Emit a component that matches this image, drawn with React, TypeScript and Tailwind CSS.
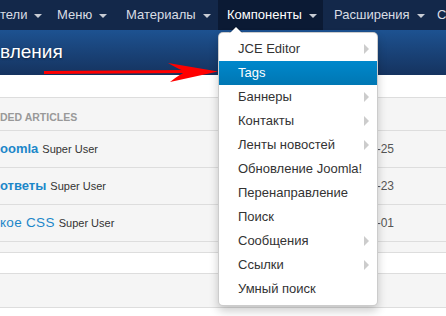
const menu = [
  { label: "JCE Editor", sub: true },
  { label: "Tags", sub: false, active: true },
  { label: "Баннеры", sub: true },
  { label: "Контакты", sub: true },
  { label: "Ленты новостей", sub: true },
  { label: "Обновление Joomla!", sub: false },
  { label: "Перенаправление", sub: false },
  { label: "Поиск", sub: false },
  { label: "Сообщения", sub: true },
  { label: "Ссылки", sub: true },
  { label: "Умный поиск", sub: false },
];

const Caret = () => (
  <span className="ml-[7px] mt-[1px] w-0 h-0 border-x-[4px] border-x-transparent border-t-[4px] border-t-[#c8ccd4]" />
);

const Row = ({
  title,
  bold = true,
  date,
}: {
  title: string;
  bold?: boolean;
  date: string;
}) => (
  <div className="h-[37px] flex items-center border-b border-[#dddddd] whitespace-nowrap">
    <span
      className={
        bold
          ? "text-[13px] font-bold text-[#1c87c9]"
          : "text-[13.5px] tracking-[0.3px] text-[#1c87c9]"
      }
    >
      {title}
    </span>
    <span className="ml-[4px] text-[11px] text-[#333333]">Super User</span>
    <span className="ml-auto pr-[52px] text-[12px] text-[#555555]">{date}</span>
  </div>
);

export default function App() {
  return (
    <div className="relative w-[446px] h-[316px] overflow-hidden bg-white font-['Liberation_Sans',Arial,sans-serif]">
      {/* top navbar */}
      <nav className="h-[30px] flex items-stretch bg-[#13284a] text-[13px] text-[#d9dde4] whitespace-nowrap overflow-hidden">
        <div className="w-[47px] shrink-0 flex items-center">
          тели <Caret />
        </div>
        <div className="w-[69px] shrink-0 flex items-center pl-[10px]">
          Меню <Caret />
        </div>
        <div className="w-[102px] shrink-0 flex items-center pl-[10px]">
          Материалы <Caret />
        </div>
        <div className="w-[105px] shrink-0 flex items-center pl-[9px] bg-[#0b1a34] text-white">
          Компоненты <Caret />
        </div>
        <div className="w-[110px] shrink-0 flex items-center pl-[11px]">
          Расширения <Caret />
        </div>
        <div className="shrink-0 flex items-center pl-[4px]">
          Справка <Caret />
        </div>
      </nav>

      {/* page title */}
      <div className="h-[45px] flex items-center bg-gradient-to-b from-[#1d5291] to-[#15335f] text-white text-[19px] [text-shadow:0_1px_2px_rgba(0,0,0,0.5)]">
        вления
      </div>

      <div className="h-[22px] bg-white" />

      {/* articles panel */}
      <div className="border-t border-[#dddddd] bg-[#f5f5f5]">
        <div className="h-[33px] pt-[8px] flex items-center border-b border-[#dddddd] text-[10.5px] font-bold text-[#999999] uppercase">
          DED ARTICLES
        </div>
        <Row title="oomla" date="2014-09-25" />
        <Row title="ответы" date="2014-09-23" />
        <Row title="кое CSS" bold={false} date="2014-09-01" />
        <div className="h-[11px] border-b border-[#dddddd]" />
      </div>
      <div className="h-[21px] bg-white border-b border-[#dddddd]" />
      <div className="h-[34px] bg-[#f5f5f5] border-b border-[#dddddd]" />

      {/* dropdown */}
      <div className="absolute left-[218px] top-[32px] w-[160px] py-[4px] rounded-[5px] bg-white border border-[rgba(0,0,0,0.2)] shadow-[0_5px_10px_rgba(0,0,0,0.2)]">
        <span className="absolute -top-[7px] left-[10px] w-0 h-0 border-x-[7px] border-x-transparent border-b-[7px] border-b-[rgba(0,0,0,0.2)]" />
        <span className="absolute -top-[6px] left-[11px] w-0 h-0 border-x-[6px] border-x-transparent border-b-[6px] border-b-white" />
        {menu.map((m) => (
          <div
            key={m.label}
            className={
              m.active
                ? "h-[24px] flex items-center pl-[19px] text-[13px] text-white bg-gradient-to-b from-[#0088cc] to-[#0077b3]"
                : "h-[24px] flex items-center pl-[19px] text-[13px] text-[#333333]"
            }
          >
            {m.label}
            {m.sub && (
              <span className="ml-auto mr-[8px] w-0 h-0 border-y-[5px] border-y-transparent border-l-[5px] border-l-[#cccccc]" />
            )}
          </div>
        ))}
      </div>

      {/* red arrow */}
      <svg
        className="absolute left-0 top-0 pointer-events-none"
        width="446"
        height="316"
        viewBox="0 0 446 316"
      >
        <path d="M44 72.5 L186 71.5" stroke="#ff0000" strokeWidth="3" />
        <path d="M218 71.5 L168 63 Q180 70 186 71.8 Q180 74 170 82 Z" fill="#ff0000" />
      </svg>
    </div>
  );
}
